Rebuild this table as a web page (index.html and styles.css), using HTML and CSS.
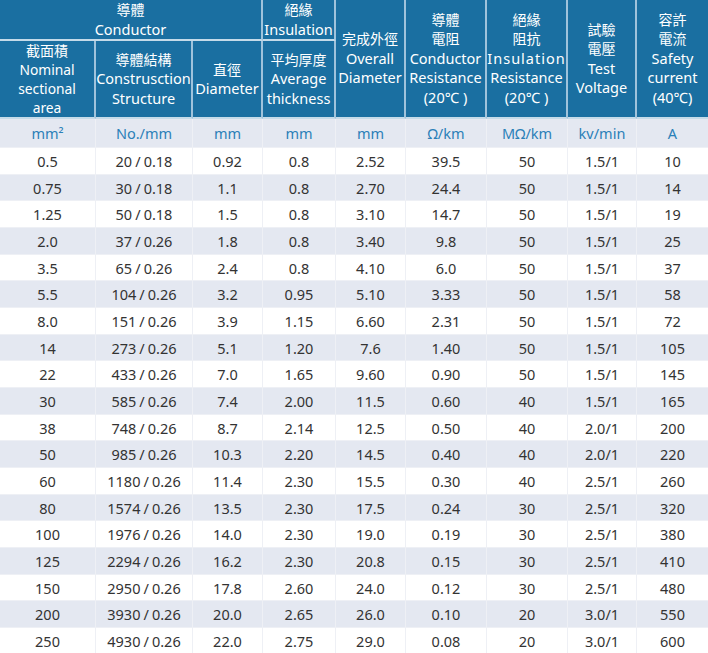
FILE: index.html
```html
<!DOCTYPE html>
<html lang="zh-Hant">
<head>
<meta charset="utf-8">
<title>Cable Specification</title>
<link rel="stylesheet" href="styles.css">
</head>
<body>
<table class="spec">
  <colgroup>
    <col class="c1"><col class="c2"><col class="c3"><col class="c4"><col class="c5"><col class="c6"><col class="c7"><col class="c8"><col class="c9">
  </colgroup>
  <thead>
    <tr class="h1">
      <th colspan="3"><span class="zh">導體</span><span class="en">Conductor</span></th>
      <th><span class="zh">絕緣</span><span class="en">Insulation</span></th>
      <th rowspan="2"><span class="zh">完成外徑</span><span class="en">Overall</span><span class="en">Diameter</span></th>
      <th rowspan="2"><span class="zh">導體</span><span class="zh">電阻</span><span class="en">Conductor</span><span class="en">Resistance</span><span class="en">(20℃ )</span></th>
      <th rowspan="2"><span class="zh">絕緣</span><span class="zh">阻抗</span><span class="en spaced">Insulation</span><span class="en">Resistance</span><span class="en">(20℃ )</span></th>
      <th rowspan="2"><span class="zh">試驗</span><span class="zh">電壓</span><span class="en">Test</span><span class="en">Voltage</span></th>
      <th rowspan="2" class="last"><span class="zh">容許</span><span class="zh">電流</span><span class="en">Safety</span><span class="en">current</span><span class="en">(40℃)</span></th>
    </tr>
    <tr class="h2">
      <th class="tight"><span class="zh">截面積</span><span class="en">Nominal</span><span class="en">sectional</span><span class="en">area</span></th>
      <th><span class="zh">導體結構</span><span class="en">Construsction</span><span class="en">Structure</span></th>
      <th><span class="zh">直徑</span><span class="en">Diameter</span></th>
      <th><span class="zh">平均厚度</span><span class="en">Average</span><span class="en">thickness</span></th>
    </tr>
  </thead>
  <tbody>
    <tr class="units">
      <td>mm²</td><td>No./mm</td><td>mm</td><td>mm</td><td>mm</td><td>Ω/km</td><td>MΩ/km</td><td>kv/min</td><td>A</td>
    </tr>
    <tr><td>0.5</td><td class="ns">20 / 0.18</td><td>0.92</td><td>0.8</td><td>2.52</td><td>39.5</td><td>50</td><td>1.5/1</td><td>10</td></tr>
    <tr><td>0.75</td><td class="ns">30 / 0.18</td><td>1.1</td><td>0.8</td><td>2.70</td><td>24.4</td><td>50</td><td>1.5/1</td><td>14</td></tr>
    <tr><td>1.25</td><td class="ns">50 / 0.18</td><td>1.5</td><td>0.8</td><td>3.10</td><td>14.7</td><td>50</td><td>1.5/1</td><td>19</td></tr>
    <tr><td>2.0</td><td class="ns">37 / 0.26</td><td>1.8</td><td>0.8</td><td>3.40</td><td>9.8</td><td>50</td><td>1.5/1</td><td>25</td></tr>
    <tr><td>3.5</td><td class="ns">65 / 0.26</td><td>2.4</td><td>0.8</td><td>4.10</td><td>6.0</td><td>50</td><td>1.5/1</td><td>37</td></tr>
    <tr><td>5.5</td><td class="ns">104 / 0.26</td><td>3.2</td><td>0.95</td><td>5.10</td><td>3.33</td><td>50</td><td>1.5/1</td><td>58</td></tr>
    <tr><td>8.0</td><td class="ns">151 / 0.26</td><td>3.9</td><td>1.15</td><td>6.60</td><td>2.31</td><td>50</td><td>1.5/1</td><td>72</td></tr>
    <tr><td>14</td><td class="ns">273 / 0.26</td><td>5.1</td><td>1.20</td><td>7.6</td><td>1.40</td><td>50</td><td>1.5/1</td><td>105</td></tr>
    <tr><td>22</td><td class="ns">433 / 0.26</td><td>7.0</td><td>1.65</td><td>9.60</td><td>0.90</td><td>50</td><td>1.5/1</td><td>145</td></tr>
    <tr><td>30</td><td class="ns">585 / 0.26</td><td>7.4</td><td>2.00</td><td>11.5</td><td>0.60</td><td>40</td><td>1.5/1</td><td>165</td></tr>
    <tr><td>38</td><td class="ns">748 / 0.26</td><td>8.7</td><td>2.14</td><td>12.5</td><td>0.50</td><td>40</td><td>2.0/1</td><td>200</td></tr>
    <tr><td>50</td><td class="ns">985 / 0.26</td><td>10.3</td><td>2.20</td><td>14.5</td><td>0.40</td><td>40</td><td>2.0/1</td><td>220</td></tr>
    <tr><td>60</td><td class="ns">1180 / 0.26</td><td>11.4</td><td>2.30</td><td>15.5</td><td>0.30</td><td>40</td><td>2.5/1</td><td>260</td></tr>
    <tr><td>80</td><td class="ns">1574 / 0.26</td><td>13.5</td><td>2.30</td><td>17.5</td><td>0.24</td><td>30</td><td>2.5/1</td><td>320</td></tr>
    <tr><td>100</td><td class="ns">1976 / 0.26</td><td>14.0</td><td>2.30</td><td>19.0</td><td>0.19</td><td>30</td><td>2.5/1</td><td>380</td></tr>
    <tr><td>125</td><td class="ns">2294 / 0.26</td><td>16.2</td><td>2.30</td><td>20.8</td><td>0.15</td><td>30</td><td>2.5/1</td><td>410</td></tr>
    <tr><td>150</td><td class="ns">2950 / 0.26</td><td>17.8</td><td>2.60</td><td>24.0</td><td>0.12</td><td>30</td><td>2.5/1</td><td>480</td></tr>
    <tr><td>200</td><td class="ns">3930 / 0.26</td><td>20.0</td><td>2.65</td><td>26.0</td><td>0.10</td><td>20</td><td>3.0/1</td><td>550</td></tr>
    <tr><td>250</td><td class="ns">4930 / 0.26</td><td>22.0</td><td>2.75</td><td>29.0</td><td>0.08</td><td>20</td><td>3.0/1</td><td>600</td></tr>
  </tbody>
</table>
</body>
</html>
```
FILE: styles.css
```css
html, body {
  margin: 0;
  padding: 0;
  background: #ffffff;
}

.spec {
  width: 708px;
  table-layout: fixed;
  border-collapse: separate;
  border-spacing: 0;
  font-family: "Noto Sans", "Noto Sans CJK TC", sans-serif;
  color: #333333;
}

.c1 { width: 96px; }
.c2 { width: 97px; }
.c3 { width: 70px; }
.c4 { width: 73px; }
.c5 { width: 70px; }
.c6 { width: 81px; }
.c7 { width: 81px; }
.c8 { width: 69px; }
.c9 { width: 71px; }

.spec th {
  background: #1a6fa1;
  color: #ffffff;
  font-weight: normal;
  font-size: 14.5px;
  padding: 0;
  text-align: center;
  vertical-align: middle;
  border-right: 2px solid #9fc3dc;
  border-bottom: 2px solid #c5dbe9;
  white-space: nowrap;
  overflow: hidden;
}

.spec th.last {
  border-right: none;
}

.spec th .zh,
.spec th .en {
  display: block;
  line-height: 19.5px;
}

.spec th .zh {
  font-size: 14px;
  font-family: "Noto Sans CJK TC", sans-serif;
  font-weight: 400;
}

.spec th.tight .zh,
.spec th.tight .en {
  line-height: 19px;
}

.spec th.tight .en {
  font-size: 13.8px;
}

.spec th .spaced {
  letter-spacing: 1px;
}

.h1 { height: 39px; }
.h2 { height: 78px; }

.spec td {
  padding: 0;
  text-align: center;
  vertical-align: middle;
  font-size: 14.5px;
  border-right: 1px solid #eef0f5;
  border-bottom: 1px solid #eef0f5;
  white-space: nowrap;
}

.spec td:last-child {
  border-right: none;
}

.spec tbody tr {
  height: 26.68px;
}

.spec tbody tr:nth-child(odd) td {
  background: #e4e8f1;
}

.spec tbody tr:nth-child(even) td {
  background: #ffffff;
}

.spec tbody tr.units {
  height: 29px;
}

.spec tbody tr.units td {
  color: #2b80b8;
  font-size: 14.5px;
  background: #e4e8f1;
}

.ns {
  word-spacing: -0.05em;
}
```
